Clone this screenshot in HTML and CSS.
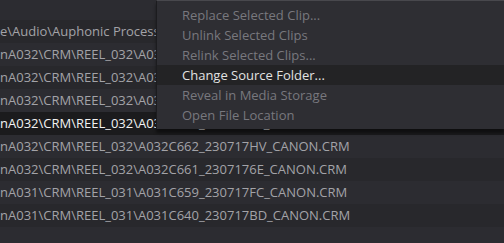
FILE: index.html
```html
<!DOCTYPE html>
<html lang="en">
<head>
    <meta charset="UTF-8">
    <title>Media Pool - Clip Menu</title>
    <link rel="stylesheet" href="styles.css">
</head>
<body>
    <div class="clip-list">
        <div class="clip-row"></div>
        <div class="clip-row">e\Audio\Auphonic Processed\Interview_01_processed.wav</div>
        <div class="clip-row">nA032\CRM\REEL_032\A032C665_230717KQ_CANON.CRM</div>
        <div class="clip-row">nA032\CRM\REEL_032\A032C664_230717T2_CANON.CRM</div>
        <div class="clip-row">nA032\CRM\REEL_032\A032C663_2307179A_CANON.CRM</div>
        <div class="clip-row selected">nA032\CRM\REEL_032\A032C663_230717PL_CANON.CRM</div>
        <div class="clip-row">nA032\CRM\REEL_032\A032C662_230717HV_CANON.CRM</div>
        <div class="clip-row">nA032\CRM\REEL_032\A032C661_2307176E_CANON.CRM</div>
        <div class="clip-row">nA031\CRM\REEL_031\A031C659_230717FC_CANON.CRM</div>
        <div class="clip-row">nA031\CRM\REEL_031\A031C640_230717BD_CANON.CRM</div>
        <div class="clip-row"></div>
    </div>

    <!-- context menu, opened over the list -->
    <div class="context-menu">
        <div class="menu-item disabled">Replace Selected Clip...</div>
        <div class="menu-item disabled">Unlink Selected Clips</div>
        <div class="menu-item disabled">Relink Selected Clips...</div>
        <div class="menu-item hover">Change Source Folder...</div>
        <div class="menu-item disabled">Reveal in Media Storage</div>
        <div class="menu-item disabled">Open File Location</div>
    </div>
</body>
</html>
```

FILE: styles.css
```css
body {
    margin: 0;
    width: 504px;
    height: 243px;
    overflow: hidden;
    background-color: #28282c;
    font-family: 'Open Sans', sans-serif;
    position: relative;
}

.clip-list {
    display: flex;
    flex-direction: column;
    margin-top: -3px;
}

.clip-row {
    height: 23px;
    line-height: 23px;
    font-size: 13px;
    color: #a3a3a8;
    white-space: nowrap;
    overflow: hidden;
    background-color: #2c2c31;
}

.clip-row:nth-child(even) {
    background-color: #28282c;
}

.clip-row.selected {
    background-color: #1b1b1d;
    color: #f2f2f2;
}

/* context menu sits over the list */
.context-menu {
    position: absolute;
    top: 0;
    left: 156px;
    right: 0;
    height: 129px;
    padding-top: 4px;
    background-color: #2e2e33;
    border-top: 1px solid #48484d;
    border-left: 1px solid #1c1c1f;
    box-shadow: 0 4px 3px rgba(0, 0, 0, 0.45);
    box-sizing: border-box;
}

.menu-item {
    height: 20px;
    line-height: 21px;
    padding-left: 25px;
    font-size: 13px;
    white-space: nowrap;
}

.menu-item.disabled {
    color: #78787e;
}

.menu-item.hover {
    background-color: #232325;
    color: #e2e2e2;
}
```
